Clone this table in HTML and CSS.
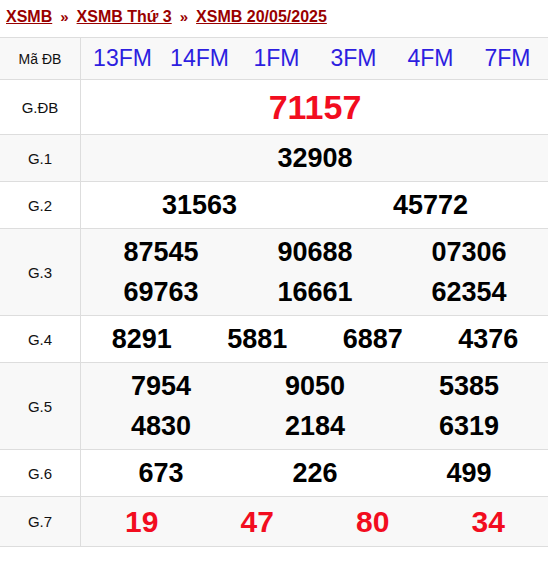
FILE: index.html
```html
<!DOCTYPE html>
<html lang="vi">
<head>
<meta charset="utf-8">
<title>XSMB 20/05/2025</title>
<link rel="stylesheet" href="styles.css">
</head>
<body>
<div class="crumbs">
  <a href="#">XSMB</a><span class="sep">»</span><a href="#">XSMB Thứ 3</a><span class="sep">»</span><a href="#">XSMB 20/05/2025</a>
</div>
<table class="kq">
  <tr class="alt">
    <td class="lbl lbl-sm">Mã ĐB</td>
    <td class="val"><div class="codes"><span>13FM</span><span>14FM</span><span>1FM</span><span>3FM</span><span>4FM</span><span>7FM</span></div></td>
  </tr>
  <tr>
    <td class="lbl">G.ĐB</td>
    <td class="val"><div class="grid c1"><span class="n db">71157</span></div></td>
  </tr>
  <tr class="alt">
    <td class="lbl">G.1</td>
    <td class="val"><div class="grid c1"><span class="n">32908</span></div></td>
  </tr>
  <tr>
    <td class="lbl">G.2</td>
    <td class="val"><div class="grid c2"><span class="n">31563</span><span class="n">45772</span></div></td>
  </tr>
  <tr class="alt">
    <td class="lbl">G.3</td>
    <td class="val"><div class="grid c3"><span class="n">87545</span><span class="n">90688</span><span class="n">07306</span><span class="n">69763</span><span class="n">16661</span><span class="n">62354</span></div></td>
  </tr>
  <tr>
    <td class="lbl">G.4</td>
    <td class="val"><div class="grid c4"><span class="n">8291</span><span class="n">5881</span><span class="n">6887</span><span class="n">4376</span></div></td>
  </tr>
  <tr class="alt">
    <td class="lbl">G.5</td>
    <td class="val"><div class="grid c3"><span class="n">7954</span><span class="n">9050</span><span class="n">5385</span><span class="n">4830</span><span class="n">2184</span><span class="n">6319</span></div></td>
  </tr>
  <tr>
    <td class="lbl">G.6</td>
    <td class="val"><div class="grid c3"><span class="n">673</span><span class="n">226</span><span class="n">499</span></div></td>
  </tr>
  <tr class="alt">
    <td class="lbl">G.7</td>
    <td class="val"><div class="grid c4"><span class="n g7">19</span><span class="n g7">47</span><span class="n g7">80</span><span class="n g7">34</span></div></td>
  </tr>
</table>
</body>
</html>
```
FILE: styles.css
```css
html, body {
  margin: 0;
  padding: 0;
  background: #fff;
  font-family: "Liberation Sans", Arial, sans-serif;
  color: #000;
}

.crumbs {
  padding: 6px 0 0 6px;
  height: 37px;
  box-sizing: border-box;
  font-size: 16px;
  font-weight: bold;
  color: #990000;
  line-height: 22px;
}

.crumbs a {
  color: #990000;
  text-decoration: underline;
}

.crumbs .sep {
  padding: 0 8px;
  font-size: 15px;
}

.kq {
  width: 100%;
  border-collapse: collapse;
  border-spacing: 0;
}

.kq td {
  border-top: 1px solid #dddddd;
  border-bottom: 1px solid #dddddd;
  padding: 3px 0;
  vertical-align: middle;
}

.kq td.val {
  padding: 3px 2px 3px 3px;
}

.kq tr.alt td {
  background: #f8f8f8;
}

.lbl {
  width: 80px;
  text-align: center;
  font-size: 15px;
  color: #111;
  border-right: 1px solid #dddddd;
}

.lbl-sm {
  font-size: 14px;
}

.codes {
  display: grid;
  grid-template-columns: repeat(6, 1fr);
  text-align: center;
  font-size: 23px;
  line-height: 35px;
  color: #2d1ee0;
}

.grid {
  display: grid;
  text-align: center;
}

.c1 { grid-template-columns: 1fr; }
.c2 { grid-template-columns: repeat(2, 1fr); }
.c3 { grid-template-columns: repeat(3, 1fr); }
.c4 { grid-template-columns: repeat(4, 1fr); }

.n {
  font-size: 27px;
  font-weight: bold;
  line-height: 40px;
}

.n.db {
  font-size: 34px;
  line-height: 48px;
  color: #f20d1f;
}

.n.g7 {
  font-size: 30px;
  line-height: 43px;
  color: #f20d1f;
}
```
